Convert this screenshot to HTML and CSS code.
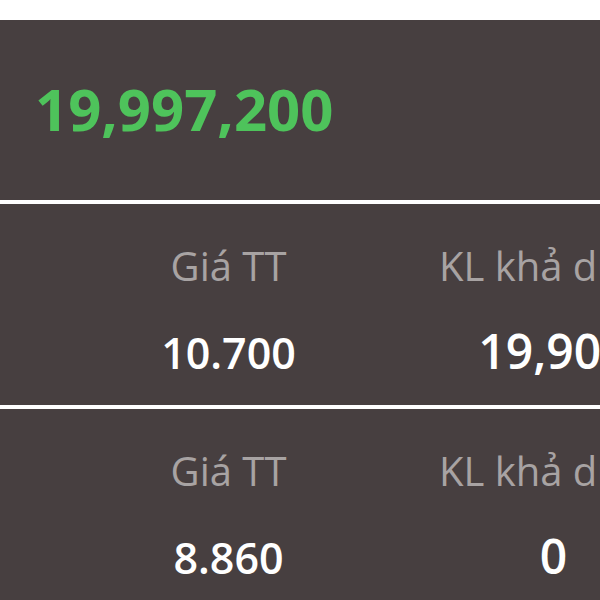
FILE: index.html
```html
<!DOCTYPE html>
<html lang="vi">
<head>
<meta charset="utf-8">
<link rel="stylesheet" href="styles.css">
</head>
<body>
<div class="page">
  <section class="card total">
    <div class="total-value">19,997,200</div>
  </section>
  <section class="card row">
    <div class="label">Giá TT</div>
    <div class="label">KL khả dụng</div>
    <div class="value">10.700</div>
    <div class="value big">19,900</div>
  </section>
  <section class="card row">
    <div class="label">Giá TT</div>
    <div class="label">KL khả dụng</div>
    <div class="value">8.860</div>
    <div class="value big">0</div>
  </section>
</div>
</body>
</html>
```
FILE: styles.css
```css
html, body {
  margin: 0;
  padding: 0;
  background: #ffffff;
}
body {
  font-family: "Open Sans", "Noto Sans", sans-serif;
  width: 600px;
  height: 600px;
  overflow: hidden;
}
.page {
  padding-top: 20px;
  display: flex;
  flex-direction: column;
  gap: 4px;
}
.card {
  background: #473f40;
}
.total {
  height: 180px;
  box-sizing: border-box;
  padding: 60px 0 0 35px;
}
.total-value {
  font-size: 58px;
  line-height: 1;
  font-weight: 700;
  color: #4ec35b;
}
.row {
  display: grid;
  grid-template-columns: 325px 325px;
  align-items: baseline;
  justify-items: center;
  row-gap: 41px;
  padding: 42px 0 30px 66px;
  white-space: nowrap;
}
.label {
  font-size: 40px;
  line-height: 1;
  color: #a8a3a3;
}
.value {
  font-size: 43px;
  line-height: 1;
  font-weight: 600;
  color: #ffffff;
}
.value.big {
  font-size: 48px;
}
```
